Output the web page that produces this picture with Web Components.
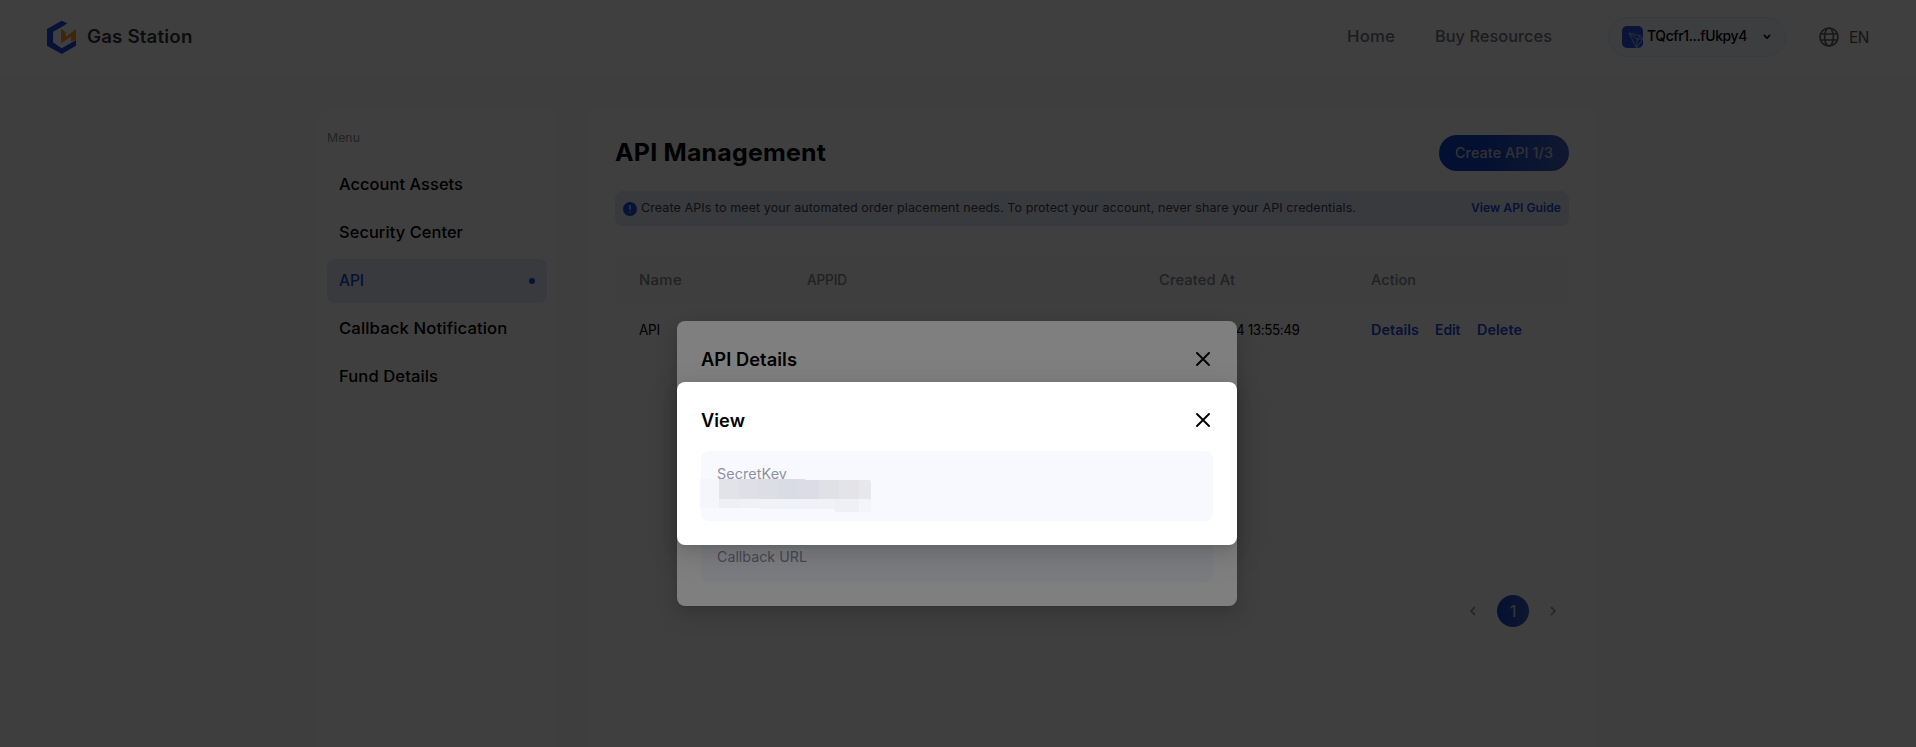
<!DOCTYPE html>
<html lang="en">
<head>
<meta charset="utf-8">
<title>Gas Station - API Management</title>
<style>
html,body{margin:0;height:100%;overflow:hidden;background:#fafafa}
body{font-family:Inter,"Open Sans",sans-serif;font-size:14px;line-height:1.5;color:#000}
</style>
</head>
<body>
<gas-app></gas-app>
<script>
const BLUE = '#1a4ad8';

function define(name, html, extra) {
  const tpl = document.createElement('template');
  tpl.innerHTML = html;
  customElements.define(name, class extends HTMLElement {
    constructor() {
      super();
      this.attachShadow({ mode: 'open' }).appendChild(tpl.content.cloneNode(true));
    }
    connectedCallback() { if (extra) extra.call(this); }
  });
}

/* A single line of text that fills the width given in "w": partly by wider glyphs, partly by tracking. */
define('fit-text', `
<style>
:host{display:inline-block;white-space:nowrap;flex:none}
span{display:inline-block;white-space:pre;transform-origin:0 50%}
</style><span><slot></slot></span>`, function () {
  const span = this.shadowRoot.querySelector('span');
  const w = parseFloat(this.getAttribute('w'));
  const n = this.textContent.length;
  this.style.width = w + 'px';
  queueMicrotask(() => {
    const natural = span.getBoundingClientRect().width;
    if (!natural || !n) return;
    const scale = Math.min(1.06, Math.max(0.96, 1 + (w / natural - 1) * 0.75));
    span.style.letterSpacing = ((w / scale - natural) / n).toFixed(3) + 'px';
    span.style.transform = 'scaleX(' + scale.toFixed(4) + ')';
  });
});

define('close-icon', `
<style>:host{display:block;width:14px;height:14px}svg{display:block}</style>
<svg width="14" height="14" viewBox="0 0 14 14" fill="none" stroke="#000" stroke-width="1.9" stroke-linecap="round"><path d="M1 1L13 13M13 1L1 13"/></svg>`);

define('wallet-pill', `
<style>
:host{display:flex;align-items:center;box-sizing:border-box;width:178px;height:40px;border:1px solid #e6eaf6;border-radius:20px;background:#f6f8fd;padding-left:13px;font-size:14.5px;font-weight:500}
svg{display:block;flex:none}
fit-text{margin:-2px 16px 0 4px}
</style>
<svg width="21" height="22" viewBox="0 0 21 22"><rect width="21" height="22" rx="5" fill="#2b4fe0"/><g fill="none" stroke="#a9b8f5" stroke-width="1" stroke-linejoin="round"><path d="M7 7L18 9.7L21 12.6L14.5 22ZM7 7L15.3 13.4L21 12.6M15.3 13.4L14.5 22M15.3 13.4L18 9.7"/></g></svg>
<fit-text w="100">TQcfr1...fUkpy4</fit-text>
<svg width="8" height="6" viewBox="0 0 8 6" fill="none" stroke="#000" stroke-width="1.6" stroke-linecap="round" stroke-linejoin="round"><path d="M1.3 1.3L4 4.2L6.7 1.3"/></svg>`);

define('site-header', `
<style>
:host{display:flex;align-items:flex-start;box-sizing:border-box;height:78px;background:#fff;padding-left:47px}
.logo{display:block;margin-top:20px}
.brand{font-size:18px;font-weight:600;color:#34343c;line-height:24px;margin:25px 0 0 11px}
nav{display:flex;margin-left:auto;font-size:16px;font-weight:500;color:#70707f;line-height:24px;padding-top:24px;gap:40px}
wallet-pill{margin:17px 33px 0 56px}
.lang{display:flex;align-items:center;gap:10px;font-size:16px;color:#555;line-height:24px;margin:25px 47px 0 0}
</style>
<svg class="logo" width="29" height="35" viewBox="0 0 29 35"><path d="M14.7 .7L20.3 3.2L16.4 6L6.1 11.7V22.5L14.7 28.2L29 20V25.7L14.7 34L0 25.7V9Z" fill="#1a4be0"/><path d="M14 8.5L18.7 12.2V17L29 9V19.5L24 21.4V16.8L14 23.3Z" fill="#f59a2c"/></svg>
<div class="brand"><fit-text w="105.5">Gas Station</fit-text></div>
<nav><fit-text w="48">Home</fit-text><fit-text w="117">Buy Resources</fit-text></nav>
<wallet-pill></wallet-pill>
<div class="lang"><svg width="20" height="20" viewBox="0 0 20 20" fill="none" stroke="#606060" stroke-width="1.7"><circle cx="10" cy="10" r="9"/><ellipse cx="10" cy="10" rx="4.4" ry="9"/><path d="M1.5 7H18.5M1.5 13H18.5"/></svg><fit-text w="20">EN</fit-text></div>`);

define('menu-item', `
<style>
:host{display:flex;align-items:center;justify-content:space-between;box-sizing:border-box;height:44px;border-radius:8px;padding:0 12px;font-size:16px;font-weight:500;line-height:24px}
slot{display:block;padding-bottom:2px}
i{display:none;width:6px;height:6px;border-radius:50%;background:${BLUE}}
:host([active]){background:#e4e8f8;color:${BLUE}}
:host([active]) i{display:block}
</style><slot></slot><i></i>`);

define('side-menu', `
<style>
:host{display:flex;flex-direction:column;gap:4px;box-sizing:border-box;width:240px;background:#fff;border-radius:16px 16px 0 0;padding:22px 10px}
.cap{font-size:12px;line-height:18px;color:#8a8a94;margin-bottom:12px}
</style>
<div class="cap"><fit-text w="33">Menu</fit-text></div>
<menu-item><fit-text w="124">Account Assets</fit-text></menu-item>
<menu-item><fit-text w="124">Security Center</fit-text></menu-item>
<menu-item active><fit-text w="25">API</fit-text></menu-item>
<menu-item><fit-text w="168.5">Callback Notification</fit-text></menu-item>
<menu-item><fit-text w="99">Fund Details</fit-text></menu-item>`);

define('notice-bar', `
<style>
:host{display:flex;align-items:center;box-sizing:border-box;height:35px;border-radius:8px;background:#e4e8f8;padding:0 8px;font-size:12px;line-height:18px;color:#404048}
svg{display:block;margin-right:4px;flex:none}
fit-text{margin-top:-1px}
.link{margin-left:auto;color:${BLUE};font-weight:600}
</style>
<svg width="14" height="14" viewBox="0 0 14 14"><circle cx="7" cy="7" r="7" fill="${BLUE}"/><path d="M7 3.2V7.8M7 9.4V10.7" stroke="#dfe5fa" stroke-width="1.4"/></svg>
<fit-text w="715">Create APIs to meet your automated order placement needs. To protect your account, never share your API credentials.</fit-text>
<fit-text class="link" w="90">View API Guide</fit-text>`);

define('api-table', `
<style>
:host{display:block}
.row{display:grid;box-sizing:border-box;grid-template-columns:168px 352px 211.5px 1fr;padding:0 0 2px 24px;line-height:20px;align-items:center}
.head{height:47px;background:#fafafa;color:#84848e;font-weight:500}
.body{height:54px}
.time{justify-self:start;padding-left:77px}
.act{display:flex;gap:16.5px;color:${BLUE};font-weight:600}
</style>
<div class="row head"><fit-text w="43">Name</fit-text><fit-text w="40">APPID</fit-text><fit-text w="76">Created At</fit-text><fit-text w="45">Action</fit-text></div>
<div class="row body"><fit-text w="21">API</fit-text><span></span><div class="time"><fit-text w="63.5">4 13:55:49</fit-text></div>
<div class="act"><fit-text w="48">Details</fit-text><fit-text w="25.5">Edit</fit-text><fit-text w="45">Delete</fit-text></div></div>`);

define('page-nav', `
<style>
:host{display:flex;align-items:center;justify-content:flex-end;gap:20px;padding-right:12px}
svg{display:block}
b{display:flex;align-items:center;justify-content:center;width:32px;height:32px;border-radius:50%;background:linear-gradient(90deg,#1444cc,#3a5cc0);color:#c8c8d0;font-size:16px;font-weight:500}
</style>
<svg width="8" height="10" viewBox="0 0 8 10" fill="none" stroke="#a0a0a4" stroke-width="1.8"><path d="M6 1L2 5L6 9"/></svg>
<b>1</b>
<svg width="8" height="10" viewBox="0 0 8 10" fill="none" stroke="#a0a0a4" stroke-width="1.8"><path d="M2 1L6 5L2 9"/></svg>`);

define('api-panel', `
<style>
:host{display:block;box-sizing:border-box;width:1010px;background:#fff;border-radius:16px 16px 0 0;padding:28px 28px 0}
.top{display:flex;justify-content:space-between;align-items:center;height:36px}
h1{margin:0;font-size:24px;font-weight:650;line-height:36px}
.btn{display:flex;align-items:center;justify-content:center;box-sizing:border-box;padding-bottom:2px;width:130px;height:36px;border-radius:18px;background:linear-gradient(90deg,#1040c8 30%,#4263c0);color:#c8c8d0;font-weight:500}
notice-bar{margin:20px 0 31px}
page-nav{margin-top:237px}
</style>
<div class="top"><h1><fit-text w="211">API Management</fit-text></h1><div class="btn"><fit-text w="98">Create API 1/3</fit-text></div></div>
<notice-bar></notice-bar>
<api-table></api-table>
<page-nav></page-nav>`);

define('modal-dialog', `
<style>
:host{position:absolute;inset:0;display:flex;justify-content:center;align-items:flex-start;background:rgba(0,0,0,.5)}
.box{box-sizing:border-box;width:560px;margin-right:2px;background:#fff;border-radius:8px;padding:24px;display:flex;flex-direction:column;justify-content:space-between;box-shadow:0 6px 16px rgba(0,0,0,.1),0 3px 6px -4px rgba(0,0,0,.14),0 9px 28px 8px rgba(0,0,0,.07)}
header{display:flex;justify-content:space-between;align-items:center;height:28px;font-size:18px;font-weight:600;padding-right:3px}
</style>
<div class="box" part="box"><header><slot name="title"></slot><close-icon></close-icon></header><slot></slot></div>`);

define('key-field', `
<style>
:host{display:block;box-sizing:border-box;border-radius:8px;background:#f7f9ff;padding:12px 16px;line-height:21px;color:#8e90a2;position:relative}
</style><slot></slot>`);

/* Pixelated cover drawn over the secret value. */
define('pixel-mask', `
<style>:host{position:absolute;left:-1px;top:28px}svg{display:block}</style>
<svg width="172" height="34" viewBox="0 0 172 34" shape-rendering="crispEdges">
<rect x="0" y="0" width="19" height="29" fill="#f5f6fb"/>
<path fill="#e2e2e9" d="M19 0H39V20H19Z"/><path fill="#dfdfe7" d="M39 0H58V20H39Z"/><path fill="#dddde6" d="M58 0H78V20H58Z"/><path fill="#d9dbe5" d="M78 0H98V20H78Z"/><path fill="#dcdce6" d="M98 0H105V1H119V20H98Z"/><path fill="#e0e1e6" d="M119 1H139V20H119Z"/><path fill="#e4e4e8" d="M139 1H159V20H139Z"/><path fill="#e7e8ec" d="M159 1H169L171 3V20H159Z"/>
<path fill="#eeeff4" d="M19 20H39V29H19Z"/><path fill="#f0f1f5" d="M39 20H60V29H39Z"/><path fill="#f1f2f6" d="M60 20H139V30H60Z"/><path fill="#eff0f5" d="M135 20H159V33H135Z"/><path fill="#f4f5f9" d="M159 20H171V33H159Z"/></svg>`);

define('gas-app', `
<style>
:host{display:block;position:relative;height:747px;overflow:hidden;background:#fafafa}
main{display:flex;gap:30px;margin:29px 0 0 317px;height:640px}
.details::part(box){height:285px;margin-top:321px}
.view::part(box){height:163px;margin-top:382px}
.details key-field{height:47px;padding-top:11px}
.view key-field{height:70px}
</style>
<site-header></site-header>
<main><side-menu></side-menu><api-panel></api-panel></main>
<modal-dialog class="details"><fit-text slot="title" w="96">API Details</fit-text><key-field><fit-text w="90">Callback URL</fit-text></key-field></modal-dialog>
<modal-dialog class="view"><fit-text slot="title" w="44">View</fit-text><key-field><fit-text w="70">SecretKey</fit-text><pixel-mask></pixel-mask></key-field></modal-dialog>`);
</script>
</body>
</html>
